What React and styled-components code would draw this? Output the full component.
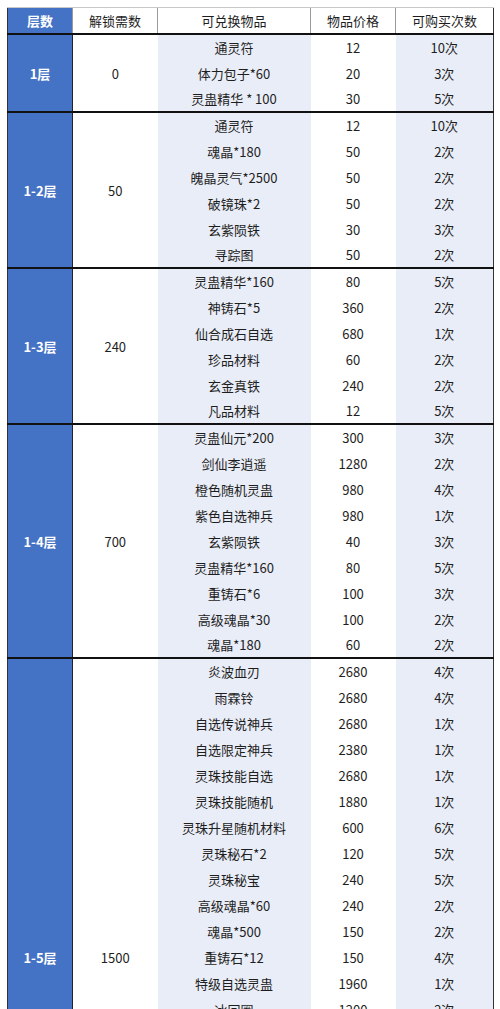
import React from 'react';
import styled, { createGlobalStyle } from 'styled-components';

const GlobalStyle = createGlobalStyle`
  body {
    margin: 0;
    background: #ffffff;
    font-family: "Noto Sans CJK SC", "Noto Sans", sans-serif;
  }
`;

const Page = styled.div`
  padding: 7px 7px 0 7px;
`;

const Table = styled.table`
  width: 486px;
  border-collapse: collapse;
  table-layout: fixed;
  font-size: 13px;
  color: #1e1e1e;
  border-left: 1px solid #333;
  border-right: 1px solid #333;
`;

const Head = styled.th`
  height: 25px;
  padding: 0;
  font-weight: ${(p) => (p.$level ? 700 : 400)};
  color: ${(p) => (p.$level ? '#ffffff' : '#1e1e1e')};
  background: ${(p) => (p.$level ? '#4472c4' : '#ffffff')};
  border-top: 1px solid #c8c8c8;
  border-left: 1px solid ${(p) => (p.$level ? '#333' : '#9a9a9a')};
  border-bottom: 2px solid #111;
  text-align: center;
`;

const Row = styled.tr`
  height: 26px;
  border-top: ${(p) => (p.$first ? '2px solid #111' : 'none')};
`;

const LevelCell = styled.td`
  background: #4472c4;
  color: #ffffff;
  font-weight: 700;
  text-align: center;
  padding: 0;
  border-right: 1px solid #222;
`;

const UnlockCell = styled.td`
  background: #ffffff;
  text-align: center;
  padding: 0;
`;

const Cell = styled.td`
  background: ${(p) => (p.$tint ? '#e9edf7' : '#ffffff')};
  text-align: center;
  padding: 0;
  white-space: nowrap;
`;

const groups = [
  {
    level: '1层',
    unlock: '0',
    items: [
      ['通灵符', '12', '10次'],
      ['体力包子*60', '20', '3次'],
      ['灵蛊精华 * 100', '30', '5次'],
    ],
  },
  {
    level: '1-2层',
    unlock: '50',
    items: [
      ['通灵符', '12', '10次'],
      ['魂晶*180', '50', '2次'],
      ['魄晶灵气*2500', '50', '2次'],
      ['破镜珠*2', '50', '2次'],
      ['玄紫陨铁', '30', '3次'],
      ['寻踪图', '50', '2次'],
    ],
  },
  {
    level: '1-3层',
    unlock: '240',
    items: [
      ['灵蛊精华*160', '80', '5次'],
      ['神铸石*5', '360', '2次'],
      ['仙合成石自选', '680', '1次'],
      ['珍品材料', '60', '2次'],
      ['玄金真铁', '240', '2次'],
      ['凡品材料', '12', '5次'],
    ],
  },
  {
    level: '1-4层',
    unlock: '700',
    items: [
      ['灵蛊仙元*200', '300', '3次'],
      ['剑仙李逍遥', '1280', '2次'],
      ['橙色随机灵蛊', '980', '4次'],
      ['紫色自选神兵', '980', '1次'],
      ['玄紫陨铁', '40', '3次'],
      ['灵蛊精华*160', '80', '5次'],
      ['重铸石*6', '100', '3次'],
      ['高级魂晶*30', '100', '2次'],
      ['魂晶*180', '60', '2次'],
    ],
  },
  {
    level: '1-5层',
    unlock: '1500',
    items: [
      ['炎波血刃', '2680', '4次'],
      ['雨霖铃', '2680', '4次'],
      ['自选传说神兵', '2680', '1次'],
      ['自选限定神兵', '2380', '1次'],
      ['灵珠技能自选', '2680', '1次'],
      ['灵珠技能随机', '1880', '1次'],
      ['灵珠升星随机材料', '600', '6次'],
      ['灵珠秘石*2', '120', '5次'],
      ['灵珠秘宝', '240', '5次'],
      ['高级魂晶*60', '240', '2次'],
      ['魂晶*500', '150', '2次'],
      ['重铸石*12', '150', '4次'],
      ['特级自选灵蛊', '1960', '1次'],
      ['冰回圈', '1200', '2次'],
      ['玄金真铁', '240', '3次'],
      ['珍品材料', '60', '5次'],
      ['灵蛊精华*300', '150', '5次'],
      ['破镜珠*5', '120', '2次'],
      ['寻踪图', '50', '3次'],
      ['通灵符', '12', '10次'],
      ['魄晶灵气*5000', '100', '2次'],
      ['玄紫陨铁', '40', '5次'],
      ['凡品材料', '12', '10次'],
    ],
  },
];

export default function App() {
  return (
    <Page>
      <GlobalStyle />
      <Table>
        <colgroup>
          <col style={{ width: 65 }} />
          <col style={{ width: 85 }} />
          <col style={{ width: 153 }} />
          <col style={{ width: 85 }} />
          <col style={{ width: 98 }} />
        </colgroup>
        <thead>
          <tr>
            <Head $level>层数</Head>
            <Head>解锁需数</Head>
            <Head>可兑换物品</Head>
            <Head>物品价格</Head>
            <Head>可购买次数</Head>
          </tr>
        </thead>
        <tbody>
          {groups.map((g, gi) =>
            g.items.map(([name, price, count], i) => (
              <Row key={`${gi}-${i}`} $first={i === 0 && gi > 0}>
                {i === 0 && (
                  <>
                    <LevelCell rowSpan={g.items.length}>{g.level}</LevelCell>
                    <UnlockCell rowSpan={g.items.length}>{g.unlock}</UnlockCell>
                  </>
                )}
                <Cell $tint>{name}</Cell>
                <Cell>{price}</Cell>
                <Cell $tint>{count}</Cell>
              </Row>
            ))
          )}
        </tbody>
      </Table>
    </Page>
  );
}
